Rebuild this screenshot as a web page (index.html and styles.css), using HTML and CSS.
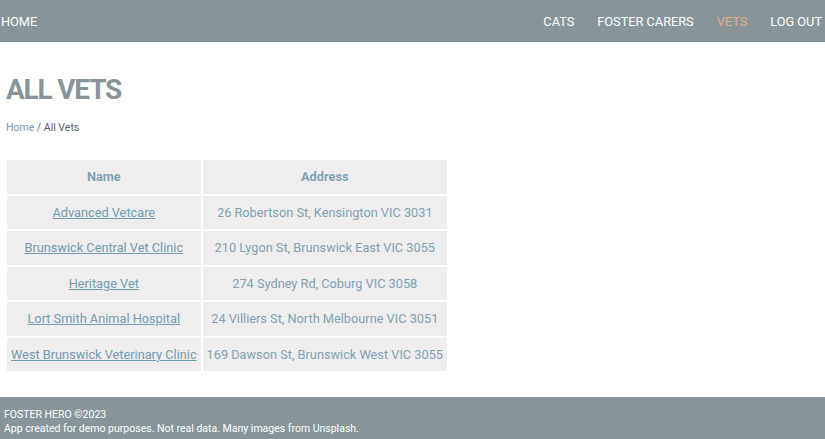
FILE: index.html
```html
<!DOCTYPE html>
<html lang="en">
<head>
<meta charset="utf-8">
<title>All Vets</title>
<link rel="stylesheet" href="styles.css">
</head>
<body>
<div class="page">
  <nav class="nav">
    <a class="nav-link" href="#">HOME</a>
    <div class="nav-right">
      <a class="nav-link" href="#">CATS</a>
      <a class="nav-link" href="#">FOSTER CARERS</a>
      <a class="nav-link active" href="#">VETS</a>
      <a class="nav-link" href="#">LOG OUT</a>
    </div>
  </nav>
  <main class="main">
    <h1 class="title">ALL VETS</h1>
    <div class="crumbs"><a href="#" class="crumb-link">Home</a> / All Vets</div>
    <table class="vets">
      <thead>
        <tr><th>Name</th><th>Address</th></tr>
      </thead>
      <tbody>
        <tr><td><a href="#">Advanced Vetcare</a></td><td>26 Robertson St, Kensington VIC 3031</td></tr>
        <tr><td><a href="#">Brunswick Central Vet Clinic</a></td><td>210 Lygon St, Brunswick East VIC 3055</td></tr>
        <tr><td><a href="#">Heritage Vet</a></td><td>274 Sydney Rd, Coburg VIC 3058</td></tr>
        <tr><td><a href="#">Lort Smith Animal Hospital</a></td><td>24 Villiers St, North Melbourne VIC 3051</td></tr>
        <tr><td><a href="#">West Brunswick Veterinary Clinic</a></td><td>169 Dawson St, Brunswick West VIC 3055</td></tr>
      </tbody>
    </table>
  </main>
  <footer class="footer">
    <div>FOSTER HERO ©2023</div>
    <div>App created for demo purposes. Not real data. Many images from Unsplash.</div>
  </footer>
</div>
</body>
</html>
```
FILE: styles.css
```css
* { box-sizing: border-box; }
html, body { margin: 0; padding: 0; }
body {
  font-family: Roboto, "Liberation Sans", sans-serif;
  background: #fff;
}
.page {
  min-height: 439px;
  display: flex;
  flex-direction: column;
}
.nav {
  height: 42px;
  background: #87959b;
  display: flex;
  align-items: center;
  justify-content: space-between;
  padding: 0 3px 0 1px;
}
.nav-right {
  display: flex;
  gap: 23px;
}
.nav-link {
  color: #fff;
  text-decoration: none;
  font-size: 12.75px;
  font-weight: 400;
}
.nav-link.active { color: #e5ab80; }
.main {
  flex: 1;
  padding: 0 6px 20px;
}
.title {
  margin: 31px 0 0;
  font-size: 28px;
  font-weight: 700;
  letter-spacing: -1.2px;
  color: #87959b;
  line-height: 34px;
}
.crumbs {
  margin-top: 14px;
  font-size: 10.5px;
  color: #555e63;
  line-height: 14px;
}
.crumb-link { color: #6f9db3; text-decoration: none; }
.vets {
  margin-top: 23px;
  border-spacing: 2px;
  margin-left: -1px;
  font-size: 12.75px;
}
.vets th, .vets td {
  background: #efeded;
  padding: 0 4px;
  height: 33.5px;
  text-align: center;
  color: #7ea3b6;
}
.vets th { font-weight: 700; }
.vets td a { color: #6f9db3; }
.footer {
  background: #87959b;
  color: #fff;
  font-size: 10.5px;
  line-height: 14px;
  padding: 11px 4px 3px;
}
```
